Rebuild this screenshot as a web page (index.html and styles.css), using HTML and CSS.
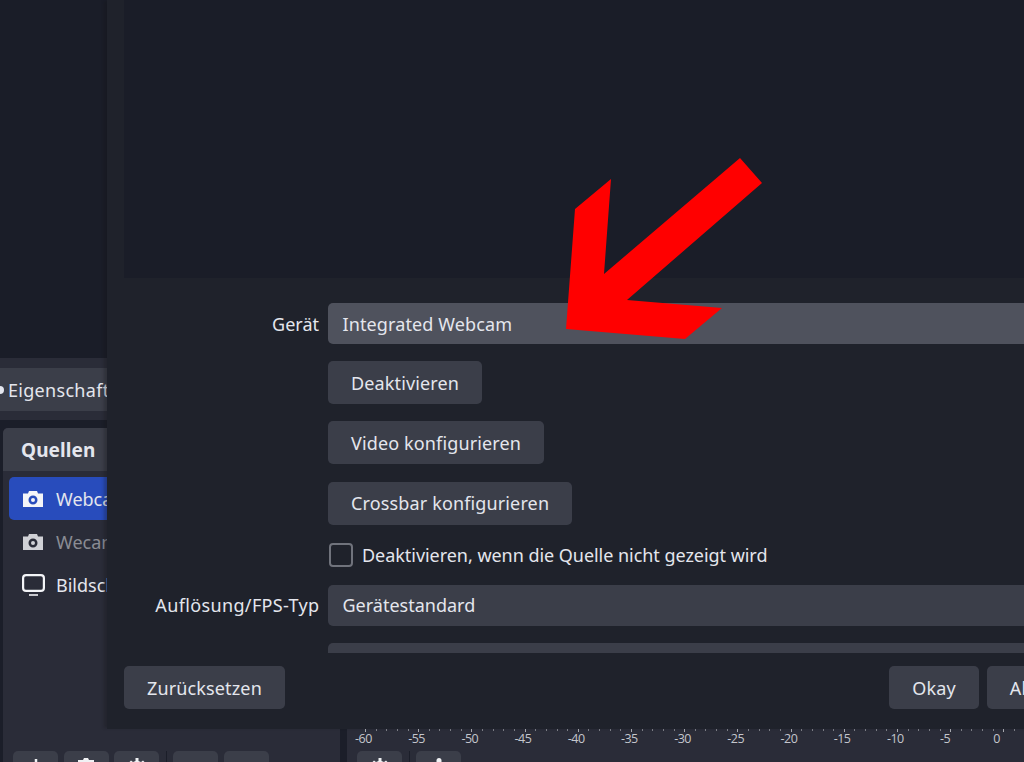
FILE: index.html
```
<!DOCTYPE html>
<html lang="de">
<head>
<meta charset="utf-8">
<title>Eigenschaften für Webcam</title>
<link rel="stylesheet" href="styles.css">
</head>
<body>
<div class="app">
  <div class="main-preview"></div>
  <div class="context-bar">
    <button class="btn props-btn"><svg class="gear-sliver" viewBox="0 0 10 10"><circle cx="5" cy="5" r="4"/></svg>Eigenschaften</button>
  </div>
  <div class="docks">
    <section class="sources">
      <h2 class="dock-title">Quellen</h2>
      <ul class="source-list">
        <li class="source selected">
          <svg class="src-icon" viewBox="0 0 20 18"><path class="cam" fill-rule="evenodd" d="M6 1h8l1 2.500h5V17H0V3.500h5zM10 5.500a4.500 4.500 0 1 0 0 9 4.500 4.500 0 0 0 0-9zM10 8a2 2 0 1 1 0 4 2 2 0 0 1 0-4z"/></svg>
          <span>Webcam</span>
        </li>
        <li class="source muted">
          <svg class="src-icon" viewBox="0 0 20 18"><path class="cam" fill-rule="evenodd" d="M6 1h8l1 2.500h5V17H0V3.500h5zM10 5.500a4.500 4.500 0 1 0 0 9 4.500 4.500 0 0 0 0-9zM10 8a2 2 0 1 1 0 4 2 2 0 0 1 0-4z"/></svg>
          <span>Wecam</span>
        </li>
        <li class="source">
          <svg class="src-icon monitor" viewBox="0 0 23 22"><rect class="mon" x="1.100" y="1.100" width="20.800" height="15.800" rx="3"/><path class="mon-base" d="M7 21h9"/></svg>
          <span>Bildschirm</span>
        </li>
      </ul>
      <div class="tools">
        <button class="tool"><svg viewBox="0 0 20 20"><path class="ic-line" d="M10 2v16M2 10h16"/></svg></button>
        <button class="tool"><svg viewBox="0 0 20 20"><path class="ic-fill" d="M2 3h5l1-2h4l1 2h5v3H2zM3 7h14v12H3z"/></svg></button>
        <button class="tool"><svg viewBox="0 0 20 20"><path class="ic-fill" d="M8.500 1h3v3l2.500 1 2-1.500 2 2L16 8l1 2h2v3H1v-3h2l1-2-2-2.500 2-2L6 5l2.500-1z"/></svg></button>
        <span class="tool-sep"></span>
        <button class="tool"></button>
        <button class="tool"></button>
      </div>
    </section>
    <section class="mixer">
      <div class="spacer"></div>
      <div class="ruler">
        <div class="ruler-ticks"></div>
        <div class="ruler-labels">
          <span>-60</span><span>-55</span><span>-50</span><span>-45</span><span>-40</span><span>-35</span><span>-30</span><span>-25</span><span>-20</span><span>-15</span><span>-10</span><span>-5</span><span>0</span>
        </div>
      </div>
      <div class="tools mixer-tools">
        <button class="tool"><svg viewBox="0 0 20 20"><path class="ic-fill" d="M8.500 1h3v3l2.500 1 2-1.500 2 2L16 8l1 2h2v3H1v-3h2l1-2-2-2.500 2-2L6 5l2.500-1z"/></svg></button>
        <span class="tool-sep"></span>
        <button class="tool"><svg viewBox="0 0 20 20"><rect class="ic-fill" x="7.500" y="1" width="5" height="12" rx="2.500"/></svg></button>
      </div>
    </section>
  </div>
</div>

<div class="dialog">
  <div class="dialog-preview"></div>
  <div class="form-scroll">
    <div class="form">
      <label class="form-label">Gerät</label>
      <div class="combo hover">Integrated Webcam</div>

      <div class="form-field-stack">
        <button class="btn form-btn">Deaktivieren</button>
        <button class="btn form-btn">Video konfigurieren</button>
        <button class="btn form-btn">Crossbar konfigurieren</button>
        <div class="check-row"><span class="checkbox"></span><span>Deaktivieren, wenn die Quelle nicht gezeigt wird</span></div>
      </div>

      <label class="form-label wide">Auflösung/FPS-Typ</label>
      <div class="combo">Gerätestandard</div>

      <div class="combo partial"></div>
    </div>
  </div>
  <div class="dialog-footer">
    <button class="btn">Zurücksetzen</button>
    <div class="footer-right">
      <button class="btn">Okay</button>
      <button class="btn">Abbrechen</button>
    </div>
  </div>
</div>

<svg class="arrow" viewBox="0 0 1024 762"><polygon points="740,158 762,183 627,300 722,308 685,339 566,329 575,209 611,179 604,274"/></svg>
</body>
</html>
```
FILE: styles.css
```
* { box-sizing: border-box; }
html, body { margin: 0; height: 100%; overflow: hidden; }
body {
  position: relative;
  width: 1024px;
  height: 762px;
  background: #1b1e29;
  color: #e4e6ed;
  font-family: "Noto Sans", "Open Sans", sans-serif;
  font-size: 18px;
  line-height: 24px;
}
button { font: inherit; color: inherit; border: 0; }

.app { display: flex; flex-direction: column; height: 762px; }
.main-preview { height: 358px; flex: none; background: #1a1d28; }

.context-bar {
  flex: none;
  height: 62px;
  padding-top: 10px;
  background: #2a2c38;
}
.btn {
  display: block;
  height: 43px;
  padding: 0 23px 0 23px;
  background: #3b3e49;
  border-radius: 5px;
  white-space: nowrap;
  letter-spacing: .14px;
}
.props-btn {
  display: flex;
  align-items: center;
  gap: 3px;
  width: 200px;
  padding: 0;
  border-radius: 0;
  letter-spacing: .3px;
}
.gear-sliver { width: 10px; height: 10px; margin-left: -5px; fill: #e4e6ed; }

.docks {
  flex: 1;
  display: flex;
  gap: 7px;
  padding: 8px 0 0 3px;
  min-height: 0;
}
.sources {
  width: 337px;
  flex: none;
  display: flex;
  flex-direction: column;
  background: #2a2c38;
  border-radius: 5px 5px 0 0;
}
.dock-title {
  margin: 0;
  height: 43px;
  padding-left: 18px;
  display: flex;
  align-items: center;
  background: #3b3e49;
  font-size: 19px;
  font-weight: 700;
  letter-spacing: .1px;
  border-radius: 5px 5px 0 0;
}
.source-list {
  list-style: none;
  margin: 0;
  padding: 6px 6px 0;
  display: flex;
  flex-direction: column;
}
.source {
  height: 43px;
  padding-left: 14px;
  display: flex;
  align-items: center;
  gap: 13px;
  border-radius: 5px;
}
.source.selected { background: #284cbc; }
.source.muted { color: #8a8c94; }
.src-icon { width: 20px; height: 20px; flex: none; }
.src-icon.monitor { width: 23px; height: 22px; margin: 0 -2px 0 -1px; }
.cam { fill: #f4f5f8; }
.muted .cam { fill: #d0d1d6; }
.mon { fill: none; stroke: #f4f5f8; stroke-width: 2.200; }
.mon-base { stroke: #c8c9ce; stroke-width: 2; fill: none; }

.tools {
  margin-top: auto;
  flex: none;
  height: 11px;
  padding-left: 10px;
  display: flex;
  gap: 5.500px;
  overflow: hidden;
}
.tool {
  flex: none;
  width: 45px;
  height: 43px;
  padding: 6px 0 0;
  background: #3b3e49;
  border-radius: 5px;
  display: flex;
  justify-content: center;
  align-items: flex-start;
}
.tool svg { width: 20px; height: 20px; display: block; }
.ic-fill { fill: #f0f1f4; }
.ic-line { stroke: #f0f1f4; stroke-width: 2.500; fill: none; }
.tool-sep { width: 1px; height: 11px; background: #1b1e29; margin: 0 1px; flex: none; }

.mixer {
  flex: 1;
  display: flex;
  flex-direction: column;
  background: #2a2c38;
  min-width: 0;
}
.spacer { flex: 1; }
.ruler { flex: none; height: 22px; }
.ruler-ticks {
  height: 3px;
  margin-left: 18px;
  background:
    repeating-linear-gradient(90deg, #a8aab0 0 1px, transparent 1px 53.200px) 0 0 / 100% 3px no-repeat,
    repeating-linear-gradient(90deg, #7d7f87 0 1px, transparent 1px 10.640px) 0 0 / 100% 2px no-repeat;
}
.ruler-labels {
  display: flex;
  padding-left: 8px;
  font-family: "Open Sans", sans-serif;
  font-size: 12.500px;
  line-height: 14px;
  letter-spacing: -0.500px;
  color: #c4c6cc;
}
.ruler-labels span { width: 53.200px; flex: none; }
.mixer-tools { padding-left: 10px; }

.dialog {
  position: absolute;
  top: 0;
  left: 107px;
  width: 1036px;
  height: 729px;
  padding: 0 17px;
  display: flex;
  flex-direction: column;
  background: #1f222b;
  box-shadow: -4px 0 3px -1px rgba(20, 20, 24, .3);
}
.dialog-preview { flex: none; height: 278px; background: #1a1d28; }
.form-scroll { flex: none; height: 375px; padding-top: 25px; overflow: hidden; }
.form {
  display: grid;
  grid-template-columns: 195px 1fr;
  column-gap: 9px;
  row-gap: 17.500px;
  align-items: center;
}
.form-label { text-align: right; }
.form-label.wide { letter-spacing: .36px; margin-right: -0.500px; }
.combo {
  grid-column: 2;
  height: 41px;
  padding: 0 14.500px;
  display: flex;
  align-items: center;
  background: #3b3e49;
  border-radius: 5px;
}
.combo.hover { background: #4f525d; letter-spacing: .12px; }
.form-field-stack {
  grid-column: 2;
  margin-top: -0.500px;
  display: flex;
  flex-direction: column;
  align-items: flex-start;
  gap: 17.450px;
}
.form-btn { padding-right: 22.500px; }
.check-row { display: flex; align-items: center; gap: 9px; height: 25px; letter-spacing: -.04px; }
.checkbox {
  width: 24px;
  height: 24px;
  margin-left: 1px;
  border: 2px solid #70737c;
  border-radius: 4px;
}
.dialog-footer {
  flex: none;
  margin-top: 13px;
  display: flex;
  justify-content: space-between;
}
.footer-right { display: flex; gap: 8px; }

.arrow {
  position: absolute;
  top: 0;
  left: 0;
  width: 1024px;
  height: 762px;
  pointer-events: none;
}
.arrow polygon { fill: #ff0000; }
```
